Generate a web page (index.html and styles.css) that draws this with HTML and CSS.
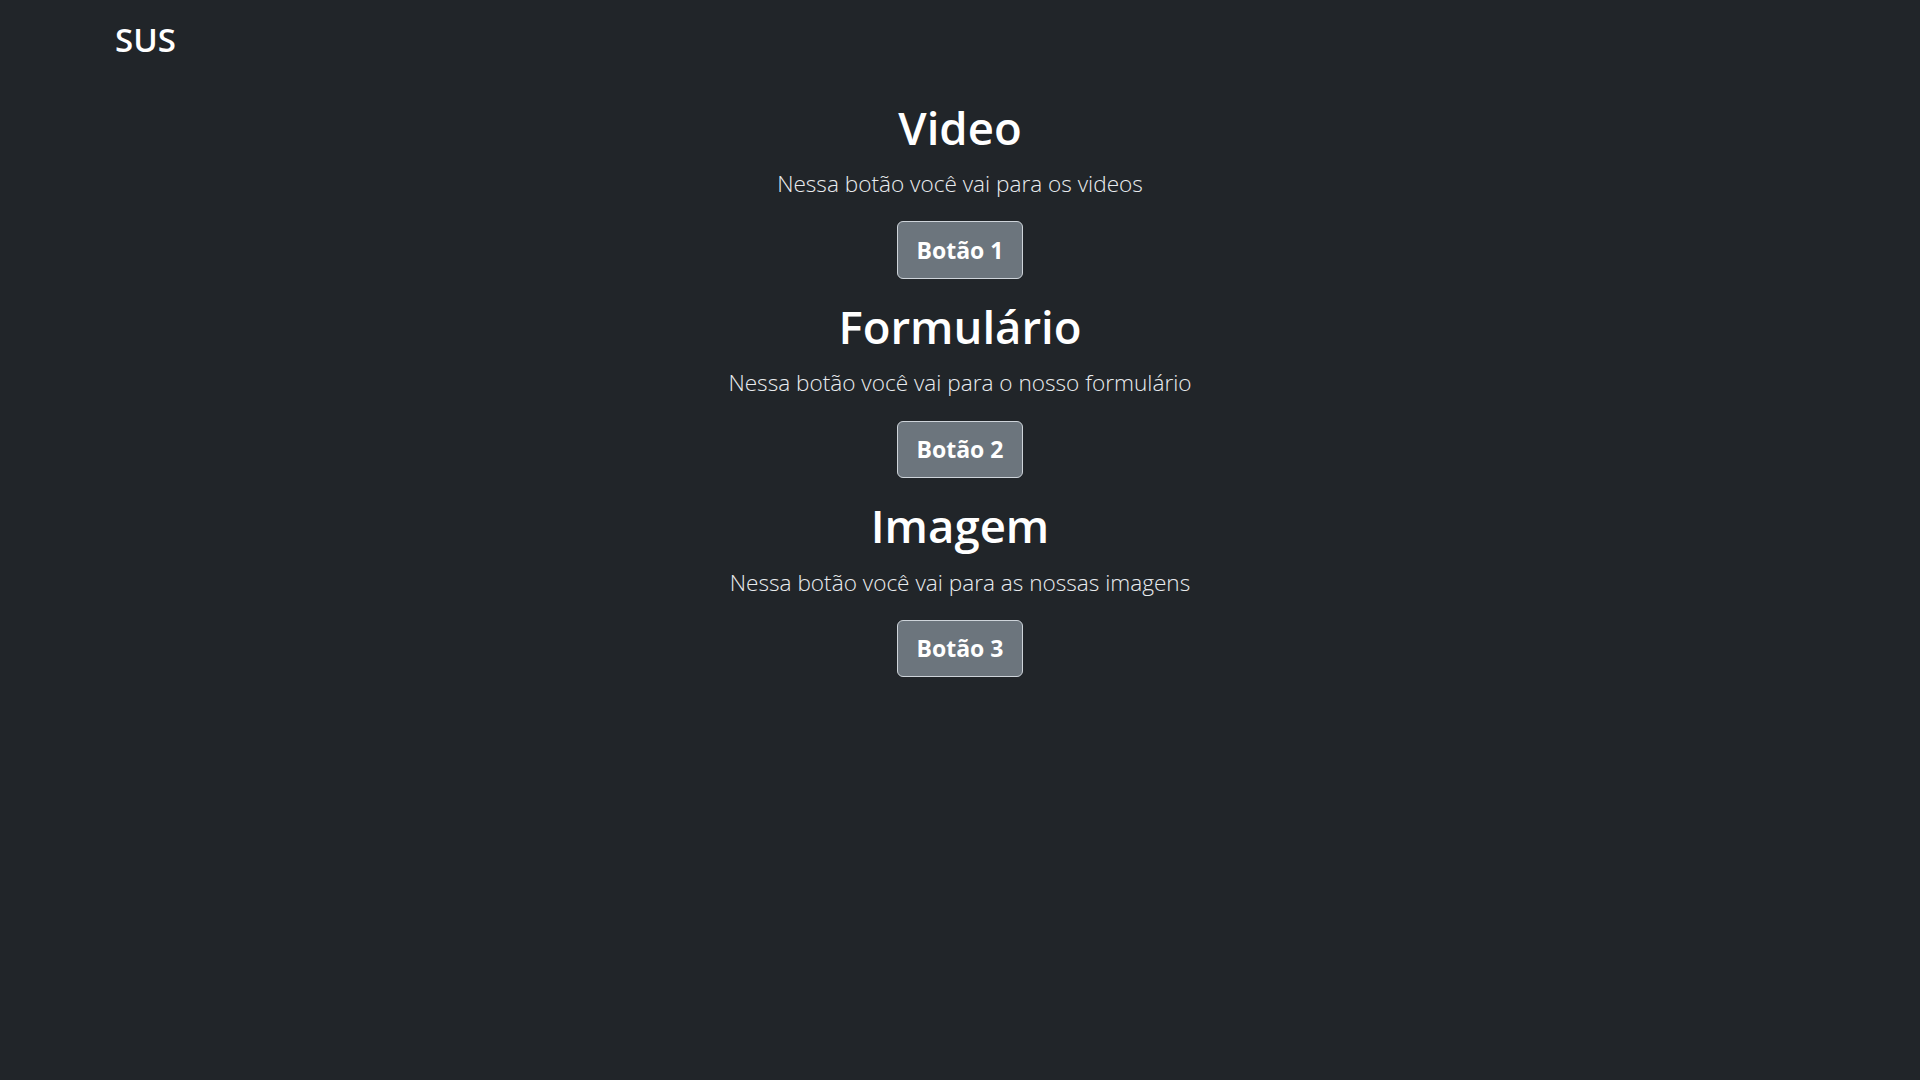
FILE: index.html
```html
<!DOCTYPE html>
<html lang="pt-BR">
<head>
<meta charset="utf-8">
<title>SUS</title>
<link rel="stylesheet" href="styles.css">
</head>
<body>
<header class="topbar">
  <span class="brand">SUS</span>
</header>
<main class="content">
  <section class="block">
    <h1 class="title">Video</h1>
    <p class="lead">Nessa botão você vai para os videos</p>
    <button class="btn">Botão 1</button>
  </section>
  <section class="block">
    <h1 class="title">Formulário</h1>
    <p class="lead">Nessa botão você vai para o nosso formulário</p>
    <button class="btn">Botão 2</button>
  </section>
  <section class="block">
    <h1 class="title">Imagem</h1>
    <p class="lead">Nessa botão você vai para as nossas imagens</p>
    <button class="btn">Botão 3</button>
  </section>
</main>
</body>
</html>
```
FILE: styles.css
```css
html, body {
  margin: 0;
  padding: 0;
  background: #212529;
  color: #dee2e6;
  font-family: "Open Sans", "Noto Sans", sans-serif;
}
body {
  min-height: 1080px;
}
.topbar {
  display: flex;
  align-items: center;
  padding: 12px 0 0 115px;
  height: 68px;
  box-sizing: border-box;
}
.brand {
  color: #fff;
  font-size: 33px;
  font-weight: 600;
  line-height: 40px;
}
.content {
  display: flex;
  flex-direction: column;
  align-items: center;
  text-align: center;
  padding-top: 31px;
}
.block {
  display: flex;
  flex-direction: column;
  align-items: center;
  margin-bottom: 19.2px;
}
.title {
  margin: 0 0 9.6px;
  color: #fff;
  font-size: 45.5px;
  font-weight: 600;
  line-height: 57.6px;
}
.lead {
  margin: 0 0 19.2px;
  font-size: 22.6px;
  font-weight: 300;
  line-height: 36px;
  color: #e9ecef;
}
.btn {
  width: 126px;
  height: 57.6px;
  box-sizing: border-box;
  background: #6c757d;
  color: #fff;
  border: 1.5px solid #ced4da;
  border-radius: 6px;
  font-family: inherit;
  font-size: 23px;
  font-weight: 700;
  padding: 0;
  cursor: pointer;
}
```
